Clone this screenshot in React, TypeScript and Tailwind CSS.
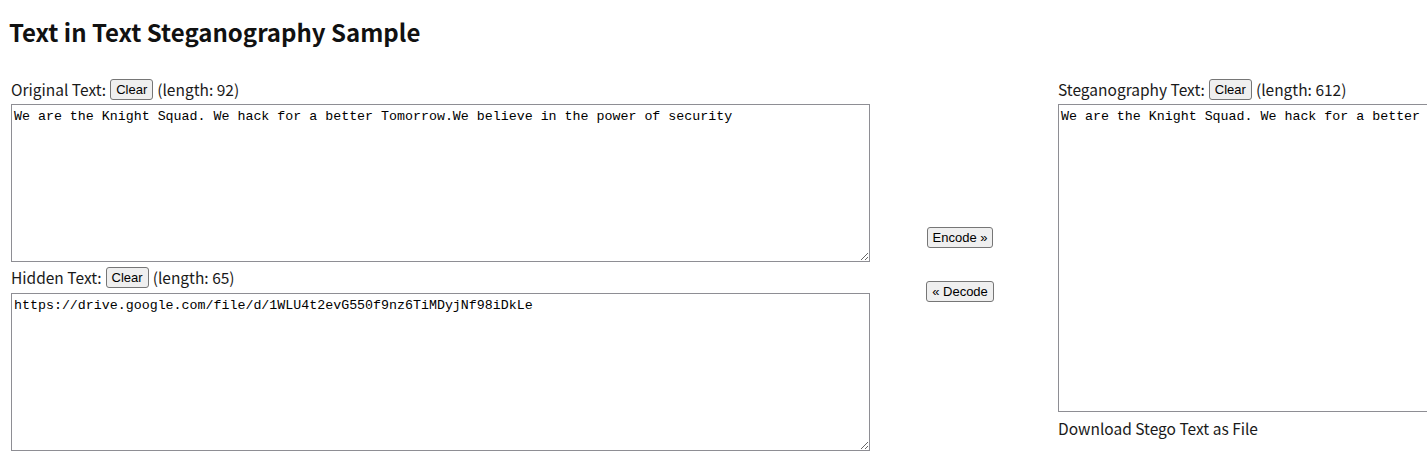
import React from 'react';

const original = 'We are the Knight Squad. We hack for a better Tomorrow.We believe in the power of security';
const hidden = 'https://drive.google.com/file/d/1WLU4t2evG550f9nz6TiMDyjNf98iDkLe';
const stego = 'We are the Knight Squad. We hack for a better Tomorrow.We believe in the power of security';

const sans = 'font-["Noto_Sans_CJK_JP","Noto_Sans",sans-serif]';

function SmallButton({ children }: { children: React.ReactNode }) {
  return (
    <button className="h-[21px] whitespace-nowrap rounded-[3px] border border-[#767676] bg-[#efefef] px-[5px] text-[13px] leading-none text-black font-['Liberation_Sans',sans-serif]">
      {children}
    </button>
  );
}

function Field({ label, length, value, height }: { label: string; length: number; value: string; height: string }) {
  return (
    <div className="flex flex-col">
      <div className={`flex items-center gap-[4px] text-[15.5px] text-[#1a1a1a] ${sans}`}>
        <span>{label}</span>
        <SmallButton>Clear</SmallButton>
        <span>(length: {length})</span>
      </div>
      <textarea
        readOnly
        defaultValue={value}
        className={`mt-[3px] w-full ${height} border border-[#8e8e94] bg-white px-[2px] pt-[3px] font-['Liberation_Mono',monospace] text-[13.3px] leading-[18px] text-black outline-none`}
      />
    </div>
  );
}

export default function App() {
  return (
    <div className="w-screen overflow-hidden bg-white">
      <h2 className={`pl-[9px] pt-[16px] text-[24px] font-bold leading-[32px] text-[#111] ${sans}`}>
        Text in Text Steganography Sample
      </h2>
      <div className="mt-[30px] flex items-start pl-[11px]">
        <div className="flex w-[859px] shrink-0 flex-col gap-[4px]">
          <Field label="Original Text:" length={92} value={original} height="h-[158px]" />
          <Field label="Hidden Text:" length={65} value={hidden} height="h-[158px]" />
        </div>
        <div className="ml-[58px] flex w-[64px] shrink-0 flex-col items-center gap-[33px] self-center">
          <SmallButton>Encode »</SmallButton>
          <SmallButton>« Decode</SmallButton>
        </div>
        <div className="ml-[66px] flex w-[860px] shrink-0 flex-col">
          <Field label="Steganography Text:" length={612} value={stego} height="h-[308px]" />
          <div className={`mt-[5px] text-[15.5px] text-[#1a1a1a] ${sans}`}>Download Stego Text as File</div>
        </div>
      </div>
    </div>
  );
}
